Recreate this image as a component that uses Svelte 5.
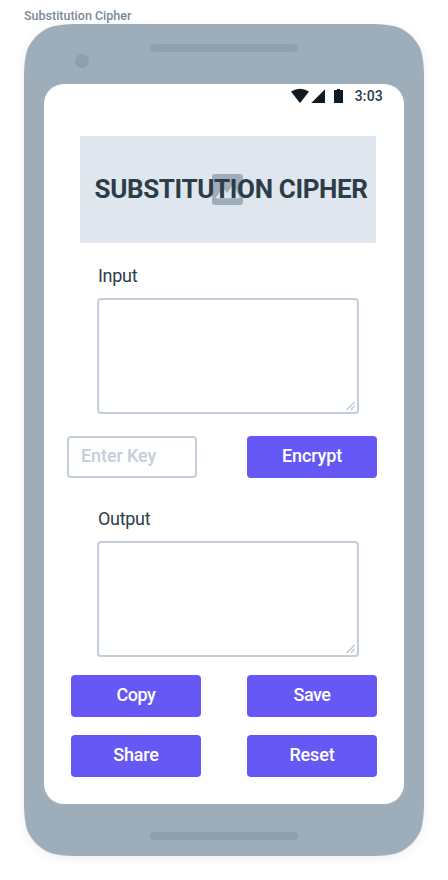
<script>
  let source = $state('');
  let result = $state('');
  let key = $state('');
</script>

<main>
  <div class="frame-name"><span>Substitution Cipher</span></div>
  <div class="phone">
    <svg class="shell" width="400" height="832" viewBox="0 0 400 832" aria-hidden="true">
      <path fill="#9eadba" d="M0 54C0 42 1 31 4 24C8.500 15 15 8.500 24 4C31 1 42 0 54 0H346C358 0 369 1 376 4C385 8.500 391.500 15 396 24C399 31 400 42 400 54V778C400 790 399 801 396 808C391.500 817 385 823.500 376 828C369 831 358 832 346 832H54C42 832 31 831 24 828C15 823.500 8.500 817 4 808C1 801 0 790 0 778Z" />
      <circle cx="58" cy="37" r="7.1" fill="#8f9fae" />
      <rect x="126" y="20" width="148" height="8" rx="4" fill="#8f9fae" />
      <rect x="126" y="808" width="148" height="8" rx="4" fill="#8f9fae" />
    </svg>
    <div class="screen">
      <div class="status">
        <svg width="54" height="16" viewBox="0 0 54 16" fill="#0f1a22" aria-hidden="true">
          <path d="M0 3.600Q9 -2.100 18 3.600L9.300 14.800H8.700Z" />
          <path d="M20.300 15L34 1.300V15Z" />
          <path d="M43 2H46V1H49V2H52V15H43Z" />
        </svg>
        <span>3:03</span>
      </div>
      <header>
        <svg class="picture" width="31" height="31" viewBox="0 0 31 31" aria-hidden="true">
          <rect width="31" height="31" rx="3" fill="#9eadba" />
          <path fill="#dfe6ee" d="M3.500 24.300L11 14L15 19L21 10.500L28 24.300Z" />
        </svg>
        <h1>SUBSTITUTION CIPHER</h1>
      </header>
      <label class="field input">
        <span>Input</span>
        <span class="area">
          <textarea bind:value={source}></textarea>
          <svg class="grip" width="10" height="10" viewBox="0 0 10 10" aria-hidden="true"><path d="M.7 9L8.700 1M4.700 9L8.700 5" /></svg>
        </span>
      </label>
      <div class="key-row">
        <input placeholder="Enter Key" bind:value={key} />
        <button class="encrypt">Encrypt</button>
      </div>
      <label class="field output">
        <span>Output</span>
        <span class="area">
          <textarea bind:value={result}></textarea>
          <svg class="grip" width="10" height="10" viewBox="0 0 10 10" aria-hidden="true"><path d="M.7 9L8.700 1M4.700 9L8.700 5" /></svg>
        </span>
      </label>
      <div class="actions">
        <button class="tight">Copy</button>
        <button class="tight">Save</button>
        <button>Share</button>
        <button>Reset</button>
      </div>
    </div>
  </div>
</main>

<style>
  :global(body) { background: #fff; }
  main {
    box-sizing: border-box;
    width: 448px;
    height: 880px;
    padding: 0 24px;
    overflow: hidden;
    font-family: Roboto, "Liberation Sans", sans-serif;
    color: #2c3c49;
  }
  .frame-name {
    height: 24px;
    padding-top: 8px;
    box-sizing: border-box;
    font-size: 12.5px;
    line-height: 15px;
    font-weight: 500;
    color: #788a9a;
    white-space: nowrap;
  }
  .phone {
    position: relative;
    width: 400px;
    height: 832px;
    box-sizing: border-box;
    padding: 60px 20px 52px;
  }
  .shell {
    position: absolute;
    inset: 0;
    overflow: visible;
    filter: drop-shadow(0 2px 4px rgba(30, 30, 40, 0.08));
  }
  .screen {
    position: relative;
    height: 720px;
    border-radius: 20px;
    background: #fff;
    overflow: hidden;
  }
  .status {
    display: flex;
    justify-content: flex-end;
    gap: 10px;
    height: 52px;
    box-sizing: border-box;
    padding: 4px 21px 0 0;
    font-size: 14px;
    line-height: 17px;
    font-weight: 500;
    letter-spacing: 0.2px;
  }
  header {
    position: relative;
    width: 296px;
    height: 107px;
    margin-left: 36px;
    background: #dfe6ee;
  }
  .picture { position: absolute; left: 132px; top: 38px; }
  h1 {
    position: relative;
    margin: 0;
    padding: 38px 0 0 14.5px;
    font-size: 26px;
    line-height: 31px;
    font-weight: 700;
    letter-spacing: -0.35px;
    white-space: nowrap;
  }
  .field { display: flex; flex-direction: column; margin-left: 53px; font-size: 18px; line-height: 22px; }
  .field > span:first-child { padding-left: 1px; letter-spacing: -0.3px; }
  .input { padding-top: 22px; }
  .output { padding-top: 30px; }
  .area { position: relative; display: flex; width: 262px; margin-top: 11px; }
  textarea, input {
    box-sizing: border-box;
    border: 2px solid #c4ceda;
    border-radius: 4px;
    background: #fff;
    outline: 0;
    color: #2c3c49;
    font: 500 18px/22px Roboto, "Liberation Sans", sans-serif;
  }
  textarea { width: 262px; height: 116px; margin: 0; padding: 8px 12px; resize: none; }
  .grip { position: absolute; right: 3px; bottom: 3px; fill: none; stroke: #b8c4d0; stroke-width: 1.1; }
  .key-row { display: flex; gap: 50px; margin: 22px 0 0 23px; }
  input { width: 130px; height: 42px; padding: 0 12px 3px; letter-spacing: -0.1px; }
  input::placeholder { color: #c4ceda; opacity: 1; }
  button {
    width: 130px;
    height: 42px;
    padding: 0 0 3px;
    border: 0;
    border-radius: 4px;
    background: #6558f5;
    color: #fff;
    font: 500 18px/22px Roboto, "Liberation Sans", sans-serif;
    letter-spacing: -0.15px;
  }
  .tight { letter-spacing: -0.5px; }
  .actions { display: grid; grid-template-columns: 130px 130px; gap: 18px 46px; margin: 18px 0 0 27px; }
</style>
